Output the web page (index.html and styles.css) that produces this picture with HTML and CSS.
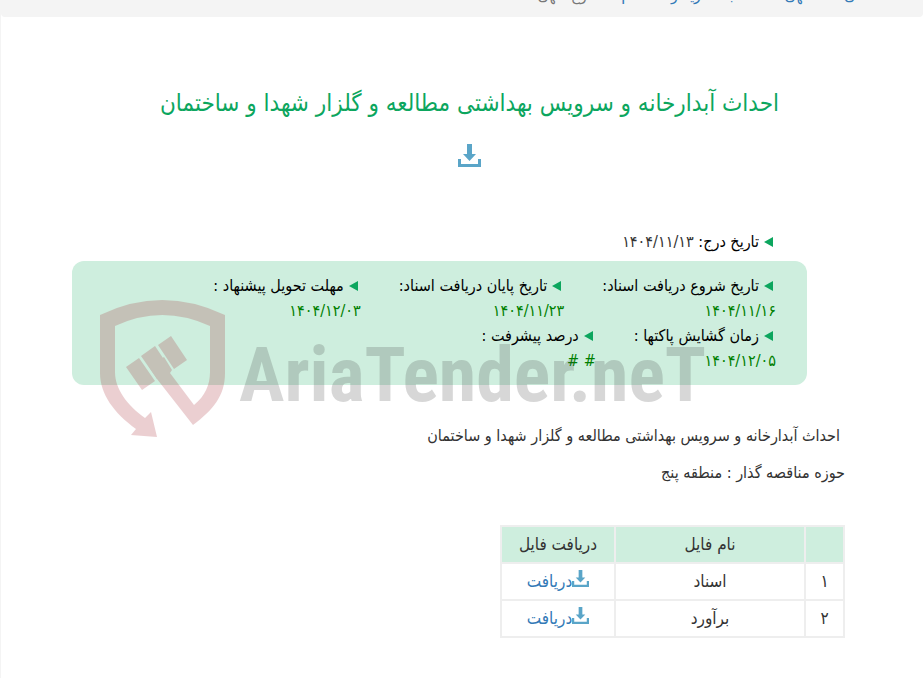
FILE: index.html
```
<!DOCTYPE html>
<html lang="fa" dir="rtl">

<head>
  <meta charset="UTF-8">
  <meta name="viewport" content="width=device-width, initial-scale=1">

  <title>احداث آبدارخانه و سرویس بهداشتی</title>

  <link rel="stylesheet" href="styles.css">
</head>

<body>
  <svg class="sprite" aria-hidden="true">
    <symbol id="download" viewBox="0 0 23 23">
      <path d="M9 0h5v10h4l-6.500 7L5 10h4zM0 15h3v5h17v-5h3v8H0z" />
    </symbol>
  </svg>

  <nav class="breadcrumb">
    <a href="#">اصلی</a>
    <a href="#">آگهی ها</a>
    <a href="#">ثبت خرید و استعلام</a>
    <span>نوع آگهی</span>
  </nav>

  <main>
    <header class="title">
      <h1>احداث آبدارخانه و سرویس بهداشتی مطالعه و گلزار شهدا و ساختمان</h1>
      <a href="#" aria-label="دریافت"><svg><use href="#download" /></svg></a>
    </header>

    <div class="tender">
      <p class="published"><b>تاریخ درج:</b> ۱۴۰۴/۱۱/۱۳</p>

      <dl class="dates">
        <div>
          <dt>تاریخ شروع دریافت اسناد:</dt>
          <dd>۱۴۰۴/۱۱/۱۶</dd>
        </div>
        <div>
          <dt>تاریخ پایان دریافت اسناد:</dt>
          <dd>۱۴۰۴/۱۱/۲۳</dd>
        </div>
        <div>
          <dt>مهلت تحویل پیشنهاد :</dt>
          <dd>۱۴۰۴/۱۲/۰۳</dd>
        </div>
        <div>
          <dt>زمان گشایش پاکتها :</dt>
          <dd>۱۴۰۴/۱۲/۰۵</dd>
        </div>
        <div>
          <dt>درصد پیشرفت :</dt>
          <dd># #</dd>
        </div>
      </dl>

      <div class="watermark" dir="ltr" aria-hidden="true">
        <svg viewBox="0 0 125 138">
          <path d="M0 15Q62-15 125 15V73C125 96 113 110 93 125L57 79L49 67L64 57L72 70L70 73L94 105C105 96 110 85 110 72V26Q62 4 15 26V72C15 89 27 105 45 118L51 112L57 137L31 135L36 129C14 113 0 94 0 73Z" />
          <path d="M26 67L39 58L55 81L42 90ZM41 56L55 46L71 70L57 79ZM58 45L71 36L87 60L74 69Z" />
        </svg>
        <span>AriaTender.neT</span>
      </div>
    </div>

    <p class="summary">احداث آبدارخانه و سرویس بهداشتی مطالعه و گلزار شهدا و ساختمان</p>
    <p>حوزه مناقصه گذار : منطقه پنج</p>

    <table>
      <thead>
        <tr>
          <th class="number"></th>
          <th class="name">نام فایل</th>
          <th class="file">دریافت فایل</th>
        </tr>
      </thead>
      <tbody>
        <tr>
          <td>۱</td>
          <td>اسناد</td>
          <td><a href="#"><svg><use href="#download" /></svg>دریافت</a></td>
        </tr>
        <tr>
          <td>۲</td>
          <td>برآورد</td>
          <td><a href="#"><svg><use href="#download" /></svg>دریافت</a></td>
        </tr>
      </tbody>
    </table>
  </main>
</body>

</html>
```
FILE: styles.css
```
body {
  margin: 0;
  border-left: 1px solid #f4f4f4;
  color: #333;
  font-family: "DejaVu Sans Condensed", "DejaVu Sans", sans-serif;
  font-size: 16px;
  line-height: 25px;
  overflow-x: hidden;
}

.sprite {
  display: none;
}

a {
  color: #337ab7;
  text-decoration: none;
}

p {
  margin: 0 0 12px;
}

.breadcrumb {
  display: flex;
  gap: 30px;
  margin-top: -18px;
  padding: 0 46px 10px;
  border-radius: 4px;
  background: #f4f4f4;

  >span {
    color: #777;
  }
}

main {
  padding: 68px 78px 40px 71px;
}

.title {
  padding-left: 22px;
  text-align: center;

  >h1 {
    margin: 0 0 23px;
    color: #0ca65e;
    font-size: 24px;
    font-weight: normal;
    line-height: 36px;
  }

  svg {
    width: 23px;
    height: 23px;
    vertical-align: -4px;
  }
}

svg {
  fill: #5aa5c8;
}

.tender {
  position: relative;
  margin: 59px 0 38px;
  padding-right: 38px;
}

.published {
  margin: 0 31px 7px 0;

  >b {
    color: #000;
    font-weight: normal;
  }
}

.published::before,
.dates dt::before {
  content: "";
  display: inline-block;
  margin: 0 3px 0 5px;
  border: 5px solid transparent;
  border-left: 0;
  border-right: 9px solid #0ca65e;
}

.dates {
  display: flex;
  flex-wrap: wrap;
  column-gap: 38px;
  margin: 0;
  padding: 12px 31px;
  border-radius: 12px;
  background: #ceeede;

  dt {
    color: #000;
  }

  dd {
    margin: 0;
    color: #008000;
  }
}

/* faded logo laid over the dates box */
.watermark {
  position: absolute;
  top: 71px;
  left: 28px;
  display: flex;
  gap: 14px;
  opacity: 0.2;
  pointer-events: none;

  svg {
    width: 125px;
    height: 138px;
    fill: #a01420;
  }

  span {
    color: #3c3c3c;
    font: bold 76px/150px "Roboto Condensed", "Liberation Sans Narrow", "Liberation Sans", sans-serif;
  }
}

.summary {
  padding-right: 5px;
}

table {
  margin-top: 40px;
  border-collapse: collapse;
  font-size: 17px;
  text-align: center;

  svg {
    width: 17px;
    height: 17px;
  }
}

th,
td {
  padding: 5px;
  border: 2px solid #eee;
  font-weight: normal;
}

th {
  background: #ceeede;
}

.number {
  width: 27px;
}

.name {
  width: 178px;
}

.file {
  width: 102px;
}
```
